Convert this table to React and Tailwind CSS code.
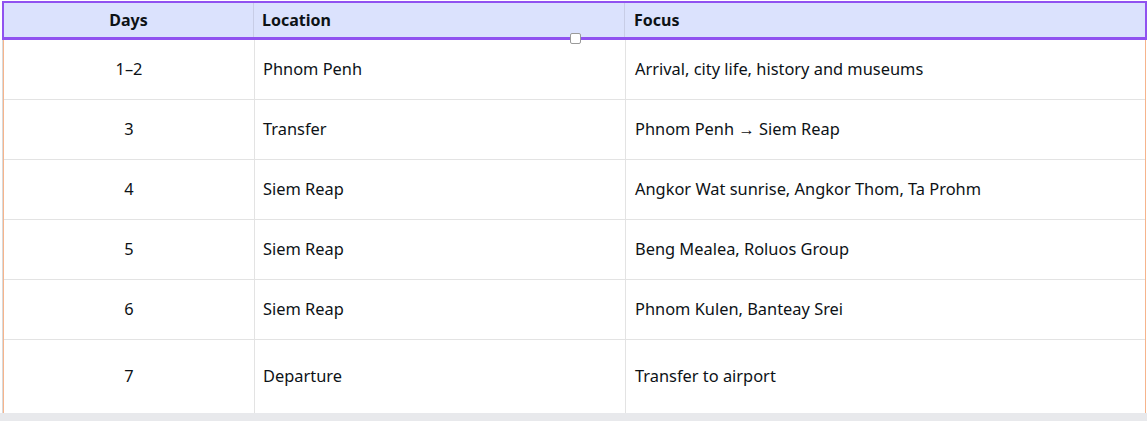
import React from "react";

const rows = [
  ["1–2", "Phnom Penh", "Arrival, city life, history and museums", "h-[60px]"],
  ["3", "Transfer", "Phnom Penh → Siem Reap", "h-[60px]"],
  ["4", "Siem Reap", "Angkor Wat sunrise, Angkor Thom, Ta Prohm", "h-[60px]"],
  ["5", "Siem Reap", "Beng Mealea, Roluos Group", "h-[60px]"],
  ["6", "Siem Reap", "Phnom Kulen, Banteay Srei", "h-[60px]"],
  ["7", "Departure", "Transfer to airport", "h-[73px]"],
];

export default function App() {
  return (
    <div
      className="w-[1147px] h-[421px] bg-white overflow-hidden flex flex-col text-[#0d1216]"
      style={{ fontFamily: '"Noto Sans", "Open Sans", sans-serif' }}
    >
      <div className="flex flex-col pl-[2px] pt-[1px]">
        {/* header */}
        <div className="relative h-[39px] flex bg-[#dbe2fd] border-2 border-b-[3px] border-[#9052f0] text-[16px] font-bold">
          <div className="w-[250px] flex items-center justify-center border-r border-[#c8cde6]">Days</div>
          <div className="w-[371px] flex items-center pl-[8px] border-r border-[#c8cde6]">Location</div>
          <div className="flex-1 flex items-center pl-[9px]">Focus</div>
          <div className="absolute left-[566px] top-[30px] w-[11px] h-[11px] bg-white border border-[#9a9a9a] rounded-[2px]" />
        </div>
        {/* body */}
        <div className="flex flex-col border-l border-[#d9d9d9] mr-[1px]">
          <div className="flex flex-col border-l border-[#f6b48c] border-r border-r-[#f6b48c] text-[16.4px]">
            {rows.map((r, i) => (
              <div
                key={i}
                className={`flex ${r[3]} ${i < rows.length - 1 ? "border-b border-[#e3e3e3]" : ""}`}
              >
                <div className="w-[251px] flex items-center justify-center border-r border-[#e3e3e3]">{r[0]}</div>
                <div className="w-[371px] flex items-center pl-[8px] border-r border-[#e3e3e3]">{r[1]}</div>
                <div className="flex-1 flex items-center pl-[9px]">{r[2]}</div>
              </div>
            ))}
          </div>
        </div>
      </div>
      <div className="flex-1 bg-[#e8e9ec]" />
    </div>
  );
}
